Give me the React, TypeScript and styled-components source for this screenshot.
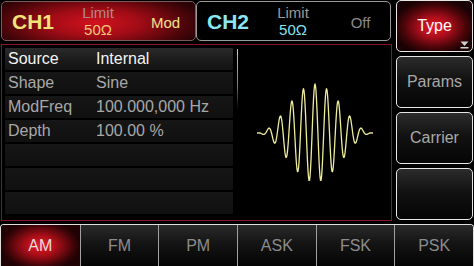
import React from "react";
import styled, { createGlobalStyle, css } from "styled-components";

const GlobalStyle = createGlobalStyle`
  html, body {
    margin: 0;
    padding: 0;
    background: #000;
  }
  body {
    font-family: "Liberation Sans", Arial, sans-serif;
  }
`;

const Screen = styled.div`
  width: 474px;
  height: 266px;
  background: #000;
  display: flex;
  flex-direction: column;
  overflow: hidden;
`;

const Upper = styled.div`
  display: flex;
  height: 221px;
  gap: 4px;
`;

const LeftCol = styled.div`
  width: 392px;
  display: flex;
  flex-direction: column;
  gap: 3px;
`;

const ChannelBar = styled.div`
  display: flex;
  height: 41px;
  padding: 1px 0 0 1px;
  box-sizing: border-box;
`;

const ChannelTab = styled.div<{ $active?: boolean }>`
  width: 195px;
  height: 40px;
  box-sizing: border-box;
  border: 1px solid ${(p) => (p.$active ? "#7a5a5a" : "#9a9a9a")};
  border-radius: 5px;
  display: grid;
  grid-template-columns: 60px 52px 1fr;
  align-items: center;
  padding-left: 10px;
  background: ${(p) =>
    p.$active
      ? "radial-gradient(ellipse 60% 90% at 48% 55%, #d2121e 0%, #a00c16 40%, #4a0509 80%, #240205 100%)"
      : "#000"};
`;

const ChannelName = styled.span<{ $color: string }>`
  font-size: 21px;
  font-weight: bold;
  color: ${(p) => p.$color};
  padding-top: 2px;
`;

const LimitBlock = styled.div`
  display: flex;
  flex-direction: column;
  align-items: center;
  line-height: 16px;
  font-size: 15px;
`;

const LimitLabel = styled.span<{ $color: string }>`
  color: ${(p) => p.$color};
`;

const LimitValue = styled.span<{ $color: string }>`
  color: ${(p) => p.$color};
  margin-top: 1px;
`;

const ChannelState = styled.span<{ $color: string }>`
  font-size: 15px;
  color: ${(p) => p.$color};
  text-align: center;
  padding-left: 12px;
  padding-top: 2px;
`;

const Panel = styled.div`
  flex: 1;
  margin-left: 1px;
  border: 1px solid #8a1222;
  display: flex;
  box-sizing: border-box;
`;

const ParamTable = styled.div`
  width: 228px;
  padding: 3px 0 0 3px;
  display: flex;
  flex-direction: column;
`;

const Row = styled.div<{ $selected?: boolean }>`
  height: 22px;
  margin-bottom: 2px;
  display: grid;
  grid-template-columns: 88px 1fr;
  align-items: center;
  padding-left: 3px;
  font-size: 16px;
  color: ${(p) => (p.$selected ? "#f4f4f4" : "#a8a8a8")};
  background: ${(p) =>
    p.$selected
      ? "linear-gradient(#2a2a2a, #1a1a1a 60%, #141414)"
      : "linear-gradient(#161616, #101010)"};
`;

const ScrollMark = styled.div`
  width: 1px;
  height: 60px;
  margin: 4px 0 0 4px;
  background: linear-gradient(#c8c8c8, #7a7a7a 60%, rgba(80, 80, 80, 0));
`;

const WavePane = styled.div`
  flex: 1;
  display: flex;
  align-items: center;
  justify-content: center;
`;

const SoftKeys = styled.div`
  flex: 1;
  display: flex;
  flex-direction: column;
  gap: 4px;
  padding-right: 1px;
`;

const keyBase = css`
  height: 52px;
  box-sizing: border-box;
  border: 1.5px solid #e6e6e6;
  border-radius: 5px;
  display: flex;
  align-items: center;
  justify-content: center;
  font-size: 16px;
  position: relative;
`;

const SoftKey = styled.div<{ $active?: boolean }>`
  ${keyBase};
  color: ${(p) => (p.$active ? "#ffffff" : "#a9a9a9")};
  background: ${(p) =>
    p.$active
      ? "radial-gradient(ellipse 55% 55% at 50% 52%, #e8182a 0%, #b00e1c 35%, #4a0509 75%, #1a0204 100%)"
      : "linear-gradient(#2c2c2c, #121212 45%, #050505)"};
`;

const MoreMark = styled.svg`
  position: absolute;
  right: 3px;
  bottom: 2px;
`;

const TabBar = styled.div`
  margin-top: 3px;
  height: 42px;
  display: grid;
  grid-template-columns: repeat(6, 1fr);
  border: 1.5px solid #e0e0e0;
  border-bottom: none;
  border-radius: 4px 4px 0 0;
  box-sizing: border-box;
  overflow: hidden;
`;

const Tab = styled.div<{ $active?: boolean }>`
  display: flex;
  align-items: center;
  justify-content: center;
  font-size: 16px;
  border-left: 1px solid #a0a0a0;
  &:first-child {
    border-left: none;
  }
  color: ${(p) => (p.$active ? "#f4d8d8" : "#8c8c8c")};
  background: ${(p) =>
    p.$active
      ? "radial-gradient(ellipse 50% 60% at 50% 50%, #e41c28 0%, #aa0e18 40%, #3c0408 85%, #200204 100%)"
      : "linear-gradient(#2a2a2a, #141414 45%, #040404)"};
`;

const params = [
  { label: "Source", value: "Internal" },
  { label: "Shape", value: "Sine" },
  { label: "ModFreq", value: "100.000,000 Hz" },
  { label: "Depth", value: "100.00 %" },
  { label: "", value: "" },
  { label: "", value: "" },
  { label: "", value: "" },
];

const tabs = ["AM", "FM", "PM", "ASK", "FSK", "PSK"];

// 100% AM: ten carrier cycles under one raised-cosine envelope
const wavePoints = () => {
  const cx = 76;
  const cy = 87;
  const half = 58;
  const pts: string[] = [];
  for (let d = -half; d <= half; d += 0.5) {
    const env = 49 * (1 + Math.cos((Math.PI * d) / half)) / 2;
    const y = cy - env * Math.cos((2 * Math.PI * d) / 11.6);
    pts.push(`${(cx + d).toFixed(1)},${y.toFixed(1)}`);
  }
  return pts.join(" ");
};

export default function App() {
  return (
    <Screen>
      <GlobalStyle />
      <Upper>
        <LeftCol>
          <ChannelBar>
            <ChannelTab $active>
              <ChannelName $color="#f2e27a">CH1</ChannelName>
              <LimitBlock>
                <LimitLabel $color="#b08a8a">Limit</LimitLabel>
                <LimitValue $color="#f6c67a">50Ω</LimitValue>
              </LimitBlock>
              <ChannelState $color="#f2e08e">Mod</ChannelState>
            </ChannelTab>
            <ChannelTab>
              <ChannelName $color="#8ae6f0">CH2</ChannelName>
              <LimitBlock>
                <LimitLabel $color="#9a9a9a">Limit</LimitLabel>
                <LimitValue $color="#8ae0ee">50Ω</LimitValue>
              </LimitBlock>
              <ChannelState $color="#8a8a8a">Off</ChannelState>
            </ChannelTab>
          </ChannelBar>
          <Panel>
            <ParamTable>
              {params.map((p, i) => (
                <Row key={i} $selected={i === 0}>
                  <span>{p.label}</span>
                  <span>{p.value}</span>
                </Row>
              ))}
            </ParamTable>
            <ScrollMark />
            <WavePane>
              <svg width="152" height="174" viewBox="0 0 152 174">
                <polyline
                  points={wavePoints()}
                  fill="none"
                  stroke="#ecec9c"
                  strokeWidth="1.3"
                  strokeLinejoin="round"
                />
              </svg>
            </WavePane>
          </Panel>
        </LeftCol>
        <SoftKeys>
          <SoftKey $active>
            Type
            <MoreMark width="9" height="8" viewBox="0 0 9 8">
              <path d="M0.5 0.5 H8.5 L4.5 5 Z" fill="#d0d0d0" />
              <rect x="0.5" y="6" width="8" height="1.5" fill="#d0d0d0" />
            </MoreMark>
          </SoftKey>
          <SoftKey>Params</SoftKey>
          <SoftKey>Carrier</SoftKey>
          <SoftKey />
        </SoftKeys>
      </Upper>
      <TabBar>
        {tabs.map((t, i) => (
          <Tab key={t} $active={i === 0}>
            {t}
          </Tab>
        ))}
      </TabBar>
    </Screen>
  );
}
